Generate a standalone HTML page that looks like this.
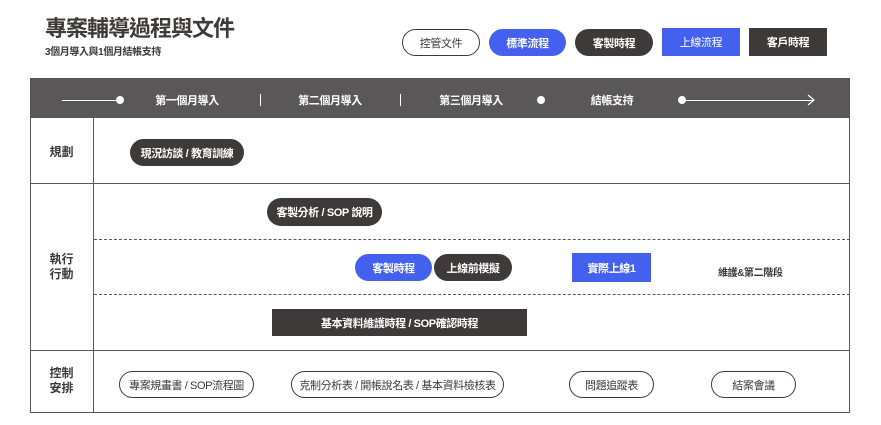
<!DOCTYPE html><html><head><meta charset="utf-8"><style>
*{margin:0;padding:0;box-sizing:border-box}
body{width:881px;height:425px;background:#fff;position:relative;font-family:"Liberation Sans","Noto Sans CJK TC",sans-serif;color:#3d3a39;overflow:hidden}
.a{position:absolute}
.b{position:absolute;display:flex;align-items:center;justify-content:center;font-size:11px;font-weight:bold;color:#fff;white-space:nowrap;letter-spacing:-0.4px}
.r{border-radius:14px}
.dk{background:#3d3a39}.bl{background:#4361ee}
.ol{border:1.3px solid #3d3a39;color:#3d3a39;background:#fff;border-radius:14px;font-weight:normal}
.ht{position:absolute;top:92px;font-size:11px;font-weight:bold;color:#fff;transform:translateX(-50%);letter-spacing:-0.4px}
.dot{position:absolute;width:8px;height:8px;border-radius:50%;background:#fff;top:96px}
.lb{position:absolute;left:30px;width:63px;display:flex;align-items:center;justify-content:center;text-align:center;font-size:12px;font-weight:bold;line-height:15px}
</style></head><body>
<div class="a" style="left:45px;top:11px;font-size:22px;font-weight:bold;letter-spacing:-1px">專案輔導過程與文件</div>
<div class="a" style="left:45px;top:43px;font-size:10px;font-weight:bold;letter-spacing:-0.4px">3個月導入與1個月結帳支持</div>
<div class="b ol" style="left:402px;top:29px;width:78px;height:27px">控管文件</div>
<div class="b bl r" style="left:489px;top:29px;width:77px;height:27px">標準流程</div>
<div class="b dk r" style="left:575px;top:29px;width:78px;height:27px">客製時程</div>
<div class="b bl" style="left:662px;top:28px;width:78px;height:28px;font-weight:normal">上線流程</div>
<div class="b dk" style="left:749px;top:28px;width:78px;height:28px">客戶時程</div>

<div class="a" style="left:30px;top:78px;width:820px;height:40px;background:#595757"></div>
<div class="a" style="left:62px;top:99.5px;width:56px;height:1px;background:#fff"></div>
<div class="dot" style="left:116px"></div>
<div class="ht" style="left:187px">第一個月導入</div>
<div class="a" style="left:260px;top:94px;width:1px;height:12px;background:#fff"></div>
<div class="ht" style="left:330px">第二個月導入</div>
<div class="a" style="left:400px;top:94px;width:1px;height:12px;background:#fff"></div>
<div class="ht" style="left:471px">第三個月導入</div>
<div class="dot" style="left:537px"></div>
<div class="ht" style="left:612px">結帳支持</div>
<div class="dot" style="left:678px"></div>
<div class="a" style="left:684px;top:99.5px;width:130px;height:1px;background:#fff"></div>
<svg class="a" style="left:806px;top:94px" width="10" height="12"><path d="M2 1 L8 6 L2 11" stroke="#fff" stroke-width="1.2" fill="none"/></svg>

<div class="a" style="left:30px;top:118px;width:820px;height:295px;border:1px solid #595757;border-top:none"></div>
<div class="a" style="left:93px;top:118px;width:1px;height:295px;background:#595757"></div>
<div class="a" style="left:30px;top:183px;width:820px;height:1px;background:#595757"></div>
<div class="a" style="left:30px;top:350px;width:820px;height:1px;background:#595757"></div>
<div class="a" style="left:94px;top:239px;width:756px;border-top:1px dashed #595757"></div>
<div class="a" style="left:94px;top:294px;width:756px;border-top:1px dashed #595757"></div>

<div class="lb" style="top:120px;height:65px">規劃</div>
<div class="lb" style="top:183px;height:167px">執行<br>行動</div>
<div class="lb" style="top:350px;height:62px">控制<br>安排</div>

<div class="b dk r" style="left:130px;top:139px;width:114px;height:27px">現況訪談 / 教育訓練</div>
<div class="b dk r" style="left:267px;top:198px;width:115px;height:28px">客製分析 / SOP 說明</div>
<div class="b bl r" style="left:355px;top:254px;width:77px;height:27px">客製時程</div>
<div class="b dk r" style="left:434px;top:254px;width:78px;height:27px">上線前模擬</div>
<div class="b bl" style="left:572px;top:253px;width:79px;height:29px">實際上線1</div>
<div class="a" style="left:718px;top:264px;font-size:10px;font-weight:bold;letter-spacing:-0.4px">維護&amp;第二階段</div>
<div class="b dk" style="left:272px;top:309px;width:255px;height:27px">基本資料維護時程 / SOP確認時程</div>

<div class="b ol" style="left:119px;top:371px;width:135px;height:27px">專案規畫書 / SOP流程圖</div>
<div class="b ol" style="left:291px;top:371px;width:213px;height:27px">克制分析表 / 開帳說名表 / 基本資料檢核表</div>
<div class="b ol" style="left:569px;top:371px;width:85px;height:27px">問題追蹤表</div>
<div class="b ol" style="left:711px;top:371px;width:85px;height:27px">結案會議</div>
</body></html>
